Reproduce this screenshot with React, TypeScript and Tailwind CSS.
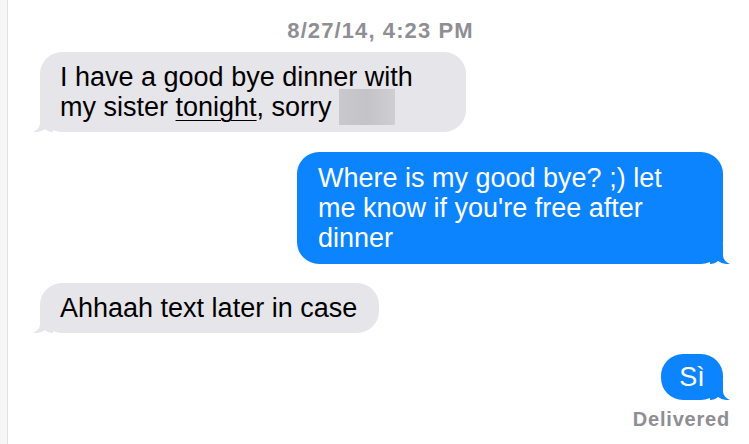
import React from 'react';

const font = { fontFamily: '"Liberation Sans", Arial, sans-serif' };

const Tail: React.FC<{ side: 'left' | 'right'; color: string }> = ({ side, color }) => (
  <svg
    width="20"
    height="20"
    viewBox="0 0 20 20"
    className={
      side === 'left'
        ? 'absolute left-[-7px] bottom-0'
        : 'absolute right-[-7px] bottom-0 -scale-x-100'
    }
  >
    <path d="M7 0 V11 C7 15 4 18.5 0 20 C5 20.5 9 19 12 17 C14 19 17 20 20 20 V0 Z" fill={color} />
  </svg>
);

const App: React.FC = () => {
  return (
    <div className="flex w-[749px] h-[444px] bg-white overflow-hidden text-black" style={font}>
      <div className="w-[8px] shrink-0 bg-[#f6f6f6] border-r border-[#e2e2e2]" />

      <div className="flex-1 flex flex-col pt-[19px] pl-[32px] pr-[19px]">
        {/* timestamp */}
        <div className="text-center text-[22px] leading-[24px] font-bold tracking-[1.1px] text-[#8e8e93] pr-[9px]">
          8/27/14, 4:23 PM
        </div>

        {/* incoming */}
        <div className="relative mt-[9px] w-[426px] rounded-[22px] bg-[#e5e5ea] px-[20px] py-[10px] text-[27px] leading-[30px]">
          <Tail side="left" color="#e5e5ea" />
          <span className="relative">
            I have a good bye dinner with my sister <span className="underline decoration-1 underline-offset-[4px]">tonight</span>, sorry{' '}
            <span className="inline-block align-[-5px] -my-[4px] w-[56px] h-[36px] bg-gradient-to-r from-[#c9c9cd] via-[#c4c4c8] to-[#cfcfd3]" />
          </span>
        </div>

        {/* outgoing */}
        <div className="relative mt-[20px] self-end mr-[7px] w-[426px] rounded-[22px] bg-[#0b84fe] px-[21px] py-[11px] text-[27px] leading-[30px] text-white">
          <Tail side="right" color="#0b84fe" />
          <span className="relative">Where is my good bye? ;) let me know if you're free after dinner</span>
        </div>

        {/* incoming */}
        <div className="relative mt-[19px] self-start rounded-[22px] bg-[#e5e5ea] pl-[20px] pr-[22px] py-[10px] text-[27px] leading-[30px]">
          <Tail side="left" color="#e5e5ea" />
          <span className="relative">Ahhaah text later in case</span>
        </div>

        {/* outgoing short */}
        <div className="relative mt-[21px] self-end mr-[7px] w-[62px] h-[46px] flex items-center justify-center rounded-[22px] bg-[#0b84fe] text-[27px] leading-[30px] text-white">
          <Tail side="right" color="#0b84fe" />
          <span className="relative">Sì</span>
        </div>

        <div className="self-end mt-[8px] text-[20px] leading-[22px] font-bold tracking-[0.8px] text-[#8e8e93]">Delivered</div>
      </div>
    </div>
  );
};

export default App;
